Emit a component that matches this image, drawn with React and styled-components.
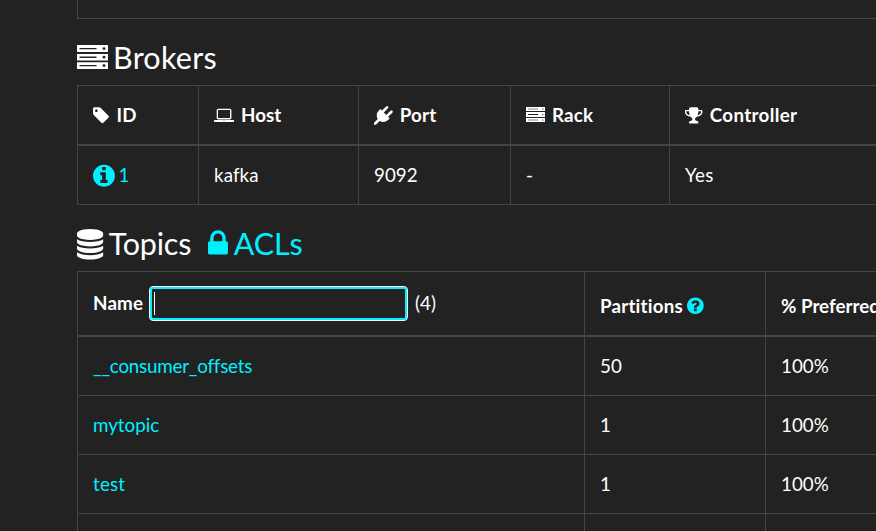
import React from "react";
import styled, { createGlobalStyle } from "styled-components";

const GlobalStyle = createGlobalStyle`
  * { box-sizing: border-box; }
  html, body { margin: 0; background: #222; }
  body { overflow: hidden; }
`;

const line = "#444";
const accent = "#00f0ff";

const CIRCLE =
  "M1664 896q0 209-103 385.5t-279.5 279.5-385.5 103-385.5-103-279.5-279.5-103-385.5 103-385.5 279.5-279.5 385.5-103 385.5 103 279.5 279.5 103 385.5z";

/* x: left edge of the glyph box, w: its advance; 1792 units are one em */
const ICONS = {
  laptop: { x: 0, w: 1920, d: "M416 1280q-66 0-113-47t-47-113v-704q0-66 47-113t113-47h1088q66 0 113 47t47 113v704q0 66-47 113t-113 47h-1088zm-32-864v704q0 13 9.5 22.5t22.5 9.5h1088q13 0 22.5-9.5t9.5-22.5v-704q0-13-9.5-22.5t-22.5-9.5h-1088q-13 0-22.5 9.5t-9.5 22.5zm1376 928h160v96q0 40-47 68t-113 28h-1600q-66 0-113-28t-47-68v-96h1760zm-720 96q16 0 16-16t-16-16h-160q-16 0-16 16t16 16h160z" },
  tag: { x: 128, w: 1536, d: "M576 448q0-53-37.5-90.5t-90.5-37.5-90.5 37.5-37.5 90.5 37.5 90.5 90.5 37.5 90.5-37.5 37.5-90.5zm1067 576q0 53-37 90l-491 492q-39 37-91 37-53 0-90-37l-715-716q-38-37-64.5-101t-26.5-117v-416q0-52 38-90t90-38h416q53 0 117 26.5t102 64.5l715 714q37 39 37 91z" },
  plug: { x: 0, w: 1792, d: "M1755 453q37 38 37 90.5t-37 90.5l-401 400 150 150-160 160q-163 163-389.5 186.5t-411.5-100.5l-362 362h-181v-181l362-362q-124-185-100.5-411.5t186.5-389.5l160-160 150 150 400-401q38-37 91-37t90 37 37 90.5-37 90.5l-400 401 234 234 401-400q38-37 91-37t90 37z" },
  trophy: { x: 64, w: 1664, d: "M522 883q-74-162-74-371h-256v96q0 78 94.5 162t235.5 113zm1078-275v-96h-256q0 209-74 371 141-29 235.5-113t94.5-162zm128-128v128q0 71-41.5 143t-112 130-173 97.5-215.5 44.5q-42 54-95 95-38 34-52.5 72.5t-14.5 89.5q0 54 30.5 91t97.5 37q75 0 133.5 45.5t58.5 114.5v64q0 14-9 23t-23 9h-832q-14 0-23-9t-9-23v-64q0-69 58.5-114.5t133.5-45.5q67 0 97.5-37t30.5-91q0-51-14.5-89.5t-52.5-72.5q-53-41-95-95-113-5-215.5-44.5t-173-97.5-112-130-41.5-143v-128q0-40 28-68t68-28h288v-96q0-66 47-113t113-47h576q66 0 113 47t47 113v96h288q40 0 68 28t28 68z" },
  info: { x: 128, w: 1536, d: "M1152 1376v-160q0-14-9-23t-23-9h-96v-512q0-14-9-23t-23-9h-320q-14 0-23 9t-9 23v160q0 14 9 23t23 9h96v320h-96q-14 0-23 9t-9 23v160q0 14 9 23t23 9h448q14 0 23-9t9-23zm-128-896v-160q0-14-9-23t-23-9h-192q-14 0-23 9t-9 23v160q0 14 9 23t23 9h192q14 0 23-9t9-23z" + CIRCLE },
  question: { x: 128, w: 1536, d: "M1024 1376v-192q0-14-9-23t-23-9h-192q-14 0-23 9t-9 23v192q0 14 9 23t23 9h192q14 0 23-9t9-23zm256-672q0-88-55.5-163t-138.5-116-170-41q-243 0-371 213-15 24 8 42l132 100q7 6 19 6 16 0 25-12 53-68 86-92 34-24 86-24 48 0 85.5 26t37.5 59q0 38-20 61t-68 45q-63 28-115.5 86.5t-52.5 125.5v36q0 14 9 23t23 9h192q14 0 23-9t9-23q0-19 21.5-49.5t54.5-49.5q32-18 49-28.5t46-35 44.5-48 28-60.5 12.5-81z" + CIRCLE },
  database: { x: 128, w: 1536, d: "M896 768q237 0 443-43t325-127v170q0 69-103 128t-280 93.5-385 34.5-385-34.5-280-93.5-103-128v-170q119 84 325 127t443 43zm0 768q237 0 443-43t325-127v170q0 69-103 128t-280 93.5-385 34.5-385-34.5-280-93.5-103-128v-170q119 84 325 127t443 43zm0-384q237 0 443-43t325-127v170q0 69-103 128t-280 93.5-385 34.5-385-34.5-280-93.5-103-128v-170q119 84 325 127t443 43zm0-1152q208 0 385 34.5t280 93.5 103 128v128q0 69-103 128t-280 93.5-385 34.5-385-34.5-280-93.5-103-128v-128q0-69 103-128t280-93.5 385-34.5z" },
  lock: { x: 320, w: 1152, d: "M640 768h512v-192q0-106-75-181t-181-75-181 75-75 181v192zm832 96v576q0 40-28 68t-68 28h-960q-40 0-68-28t-28-68v-576q0-40 28-68t68-28h32v-192q0-184 132-316t316-132 316 132 132 316v192h32q40 0 68 28t28 68z" },
};

const Glyph = styled.svg`
  display: block;
  flex: none;
  overflow: visible;
  fill: currentColor;
  margin-right: ${(p) => p.$gap}px;
  margin-top: ${(p) => p.$drop || 0}px;
`;

function Icon({ name, size, gap = 0, drop }) {
  const { x, w, d } = ICONS[name];
  return (
    <Glyph
      viewBox={`${x} 0 ${w} 1792`}
      width={(size * w) / 1792}
      height={size}
      $gap={gap}
      $drop={drop}
      aria-hidden="true"
    >
      <path fillRule="evenodd" d={d} />
    </Glyph>
  );
}

function ServerIcon({ large, gap, drop }) {
  if (large) {
    return (
      <Glyph viewBox="0 0 31 24" width="31" height="24" $gap={gap} $drop={drop} aria-hidden="true">
        <path d="M0 0h31v7H0zM0 9h31v6.4H0zM0 17.2h31V24H0z" />
        <g fill="#222">
          <path d="M2.5 3h17v1.3h-17zM2.5 11.6h17v1.3h-17zM2.5 20h17v1.3h-17z" />
          <circle cx="27" cy="3.6" r="1.4" />
          <circle cx="27" cy="12.2" r="1.4" />
          <circle cx="27" cy="20.6" r="1.4" />
        </g>
      </Glyph>
    );
  }
  return (
    <Glyph viewBox="0 0 19 15" width="19" height="15" $gap={gap} $drop={drop} aria-hidden="true">
      <path d="M0 0h19v4H0zM0 5h19v5H0zM0 11h19v4H0z" />
      <g fill="#222">
        <path fillOpacity=".55" d="M2 1.6h10v1H2zM2 12.5h10v1H2z" />
        <path d="M2 7h10v1H2z" />
        <path fillOpacity=".7" d="M16 1.5h1.3v1.3H16zM16 6.9h1.3v1.3H16zM16 12.4h1.3v1.3H16z" />
      </g>
    </Glyph>
  );
}

const Page = styled.main`
  width: 876px;
  height: 531px;
  overflow: hidden;
  padding-left: 77px;
  background: #222;
  color: #fff;
  font: 400 18.75px/28px Lato, sans-serif;
  font-variant-ligatures: none;
`;

const PreviousTable = styled.div`
  height: 19px;
  border-left: 1px solid ${line};
  border-bottom: 1px solid ${line};
`;

const Heading = styled.h3`
  display: flex;
  align-items: center;
  height: 66px;
  padding-top: 10px;
  margin: 0;
  font-size: 30.5px;
  font-weight: 400;
  line-height: 37px;
`;

const Label = styled.span`
  letter-spacing: ${(p) => p.$track || 0}px;
`;

const HeadingLink = styled.a`
  display: flex;
  align-items: center;
  margin-left: 17px;
  color: ${accent};
`;

const Table = styled.div`
  border-top: 1px solid ${line};
`;

const Row = styled.div`
  display: grid;
  grid-template-columns: ${(p) => p.$columns};
  height: ${(p) => p.$height}px;
  border-bottom: ${(p) => (p.$head ? 2 : 1)}px solid ${line};
  font-weight: ${(p) => (p.$head ? 700 : 400)};
`;

const Cell = styled.div`
  display: flex;
  align-items: center;
  min-width: 0;
  padding-left: 15px;
  padding-top: ${(p) => p.$drop || 0}px;
  border-left: 1px solid ${line};
  white-space: nowrap;
`;

const Link = styled.a`
  display: flex;
  align-items: center;
  color: ${accent};
`;

const HelpLink = styled(Link)`
  margin-left: 4px;
`;

const NameLabel = styled.span`
  width: 50px;
  margin-top: -2px;
  letter-spacing: 0.2px;
`;

const Filter = styled.div`
  display: flex;
  align-items: center;
  width: 259px;
  height: 35px;
  margin: 0 7px 0 6px;
  padding-left: 2px;
  border: 1px solid #fff;
  border-radius: 4px;
  box-shadow: inset 0 0 0 2px ${accent};
`;

const Caret = styled.span`
  width: 1px;
  height: 23px;
  margin-left: 2px;
  background: #fff;
`;

const Count = styled.span`
  margin-top: -2px;
  font-weight: 400;
`;

const brokerColumns = "121px 160px 152px 159px 1fr";
const topicColumns = "507px 181px 1fr";

const brokerHeads = [
  { icon: "tag", label: "ID", gap: 7.4, track: 0.2 },
  { icon: "laptop", label: "Host", gap: 7, track: 0 },
  { icon: "plug", label: "Port", gap: 7, track: 0.2 },
  { icon: "server", label: "Rack", gap: 7, track: 0.2 },
  { icon: "trophy", label: "Controller", gap: 7.3, track: 0.35 },
];

const topics = [
  { name: "__consumer_offsets", track: -0.2, partitions: "50", preferred: "100%" },
  { name: "mytopic", track: 0, partitions: "1", preferred: "100%" },
  { name: "test", track: 0.2, partitions: "1", preferred: "100%" },
  { name: "", track: 0, partitions: "", preferred: "" },
];

export default function App() {
  return (
    <Page>
      <GlobalStyle />
      <PreviousTable />
      <Heading>
        <ServerIcon large gap={5} />
        <Label $track={0.25}>Brokers</Label>
      </Heading>
      <Table>
        <Row $head $columns={brokerColumns} $height={60}>
          {brokerHeads.map(({ icon, label, gap, track }) => (
            <Cell key={label}>
              {icon === "server" ? (
                <ServerIcon gap={gap} drop={-1} />
              ) : (
                <Icon name={icon} size={18.75} gap={gap} />
              )}
              <Label $track={track}>{label}</Label>
            </Cell>
          ))}
        </Row>
        <Row $columns={brokerColumns} $height={59}>
          <Cell>
            <Link>
              <Icon name="info" size={25.6} gap={3.5} drop={2} />1
            </Link>
          </Cell>
          <Cell>
            <Label $track={0.1}>kafka</Label>
          </Cell>
          <Cell>9092</Cell>
          <Cell>-</Cell>
          <Cell>
            <Label $track={0.3}>Yes</Label>
          </Cell>
        </Row>
      </Table>
      <Heading>
        <Icon name="database" size={30.5} gap={5.5} drop={2} />
        <Label $track={-0.2}>Topics</Label>
        <HeadingLink>
          <Icon name="lock" size={31} gap={5.5} drop={1} />
          ACLs
        </HeadingLink>
      </Heading>
      <Table>
        <Row $head $columns={topicColumns} $height={65}>
          <Cell>
            <NameLabel>Name</NameLabel>
            <Filter>
              <Caret />
            </Filter>
            <Count>(4)</Count>
          </Cell>
          <Cell $drop={4}>
            <Label $track={0.2}>Partitions</Label>
            <HelpLink>
              <Icon name="question" size={19.5} drop={1} />
            </HelpLink>
          </Cell>
          <Cell $drop={4}>% Preferred</Cell>
        </Row>
        {topics.map(({ name, track, partitions, preferred }, i) => (
          <Row key={i} $columns={topicColumns} $height={59}>
            <Cell>
              <Link>
                <Label $track={track}>{name}</Label>
              </Link>
            </Cell>
            <Cell>{partitions}</Cell>
            <Cell>{preferred}</Cell>
          </Row>
        ))}
      </Table>
    </Page>
  );
}
